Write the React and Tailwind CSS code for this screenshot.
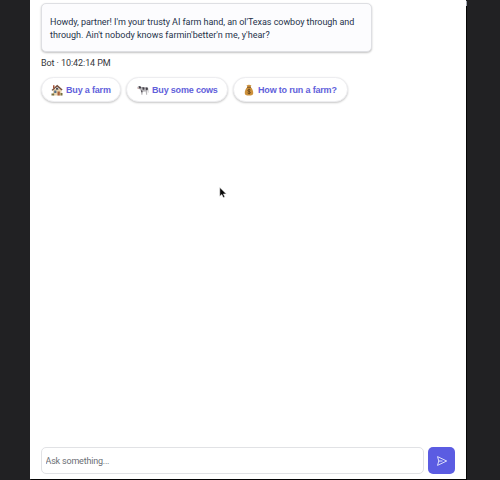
import React from "react";

function HouseIcon() {
  return (
    <svg viewBox="0 0 12 12" className="h-3 w-3 shrink-0">
      <path d="M2 5h8.5v6.5H2z" fill="#e8d5b0" />
      <path d="M0.5 6 6.2 0.8 11.6 5.6 10.6 6.5 6.2 2.8 1.6 6.8z" fill="#76503c" />
      <path d="M2 1.3h1.5v2.2L2 4.7z" fill="#a45339" />
      <path d="M6.5 7.5h2.3v4H6.5z" fill="#a8603a" />
      <path d="M3.2 6.5h2.2v2.5H3.2z" fill="#54708b" />
      <path d="M5 3.7h2.3v2H5z" fill="#4e4d56" />
      <path d="M0.5 9.6h2.7v2H0.5zM9.5 9h2v2.6h-2z" fill="#77703f" />
    </svg>
  );
}

function CowIcon() {
  return (
    <svg viewBox="0 0 12 12" className="h-3 w-3 shrink-0">
      <path d="M0.4 3 1.8 2 3.6 2.4 5 3.2h5.4l.9 1.2.2 4.2-.6.2-.4-3.3-.5 1.2.2 4H9.1L8.7 7.4 5.8 7.7l-.3 3.1H4.3L3.9 7 2.7 5.2.7 4.8z" fill="#b9b7ba" />
      <path d="M1.8 2 3.6 2.4l.7 1.2-1 1.2-1.2-.5zM5.2 3.3h2.1l.2 2-1.6.8zM8.7 3.5h1.7l.6 1.6-1 1.4-1.2-.9zM4.1 6.1l1.4.8-.2 1.4h-1z" fill="#45424a" />
      <path d="M.3 3.7h1.3l.3 1.1H.8z" fill="#d4a5a0" />
    </svg>
  );
}

function MoneyBagIcon() {
  return (
    <svg viewBox="0 0 12 12" className="h-3 w-3 shrink-0">
      <path d="M4.4 3 3.6.9 5 1.2 6 .6l1 .7 1.4-.3L7.6 3c1.7 1.5 2.9 4.2 2.6 6.5-.3 1.5-1.2 2-4.2 2s-3.9-.5-4.2-2C1.5 7.2 2.7 4.5 4.4 3z" fill="#cd913b" />
      <path d="M4 2.8h4v.9H4z" fill="#75502a" />
      <path d="M7.4 6C6.7 5.2 4.9 5.3 4.9 6.5c0 1.4 2.5.7 2.5 2.1 0 1.2-2 1.2-2.8.3M6.1 4.8v5.4" fill="none" stroke="#65451f" strokeWidth=".9" />
    </svg>
  );
}

function Suggestion({ icon, label, size }) {
  return (
    <button className={`flex h-[25px] shrink-0 items-center rounded-full border border-[#ededf0] bg-white shadow-[0_1px_2px_rgba(0,0,0,0.22)] ${size}`}>
      {icon}
      <span className="ml-[3px] whitespace-nowrap font-['Liberation_Sans',Arial,sans-serif] text-[9px] font-bold leading-3 tracking-[-0.18px] text-[#625fdb]">{label}</span>
    </button>
  );
}

export default function App() {
  return (
    <div className="relative h-[480px] w-[500px] overflow-hidden bg-[#212123] font-['Roboto','Liberation_Sans',sans-serif]">
      <main className="ml-[30px] flex h-[479px] w-[436px] flex-col bg-white pl-[11px] pt-[3px] shadow-[1px_1px_0_#050505]">
        <div className="h-[49px] w-[331px] shrink-0 rounded-[5px] border border-[#dedfe3] bg-[#fcfcfe] pl-2 pt-3 text-[9px] leading-[13px] text-[#26324a] shadow-[0_1px_2px_rgba(0,0,0,0.24)]">
          <p className="whitespace-nowrap tracking-[-0.04px]">Howdy, partner! I'm your trusty AI farm hand, an ol'Texas cowboy through and</p>
          <p className="whitespace-nowrap tracking-[0.01px]">through. Ain't nobody knows farmin'better'n me, y'hear?</p>
        </div>
        <p className="mt-1 h-[14px] whitespace-nowrap text-[9px] leading-[14px] tracking-[-0.08px] text-[#35363b]">Bot · 10:42:14 PM</p>
        <div className="mt-[7px] flex gap-[5px]">
          <Suggestion icon={<HouseIcon />} label="Buy a farm" size="w-[80px] pl-[9px]" />
          <Suggestion icon={<CowIcon />} label="Buy some cows" size="w-[102px] pl-[10px]" />
          <Suggestion icon={<MoneyBagIcon />} label="How to run a farm?" size="w-[115px] pl-[9px]" />
        </div>
        <form className="mb-[5px] mt-auto flex gap-1">
          <input
            type="text"
            placeholder="Ask something..."
            className="h-[27px] w-[383px] rounded-[5px] border border-[#e1e2e5] bg-white px-[3.5px] text-[9px] tracking-[-0.2px] outline-none placeholder:text-[#6b6e74]"
          />
          <button type="button" aria-label="Send" className="flex h-[27px] w-[27px] items-center justify-center rounded-[5px] bg-[#5b5ce2]">
            <svg viewBox="0 0 12 12" className="h-3 w-3" fill="none" stroke="#dddffa" strokeWidth="1" strokeLinejoin="round" strokeLinecap="round">
              <path d="M2.8 6 1.5 1.6 10.7 6 1.5 10.4 2.8 6h3.3" />
            </svg>
          </button>
        </form>
      </main>
      <span className="absolute left-[466px] top-[1px] h-[5px] w-px bg-[#a5aab5]" />
      <svg viewBox="0 0 8 12" className="absolute left-[219px] top-[187px] h-3 w-2">
        <path d="M.8.5v8.7l2-1.8 1.5 3.2 1.5-.7-1.4-3h2.9z" fill="#080808" stroke="#eeeeee" strokeWidth=".5" />
      </svg>
    </div>
  );
}
